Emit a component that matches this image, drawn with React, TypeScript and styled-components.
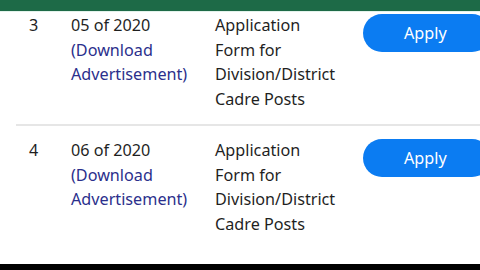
import * as React from 'react';
import styled, { createGlobalStyle } from 'styled-components';

const GREEN = '#1d6a47';
const BLUE = '#0b7cf2';
const NAVY = '#2b2f8c';
const TEXT = '#1f1f1f';
const LINE = '#e6e6e6';

const GlobalStyle = createGlobalStyle`
  html, body {
    margin: 0;
    padding: 0;
    background: #ffffff;
  }
  body {
    width: 480px;
    height: 270px;
    overflow: hidden;
    font-family: "Noto Sans", "Open Sans", sans-serif;
  }
`;

interface Post {
  no: number;
  advt: string;
  title: string[];
}

const posts: Post[] = [
  { no: 3, advt: '05 of 2020', title: ['Application', 'Form for', 'Division/District', 'Cadre Posts'] },
  { no: 4, advt: '06 of 2020', title: ['Application', 'Form for', 'Division/District', 'Cadre Posts'] },
];

function Row({ post, first }: { post: Post; first?: boolean }) {
  return (
    <Row.Wrapper $first={first}>
      <Row.Number>{post.no}</Row.Number>
      <Row.Advt>
        {post.advt}
        <br />
        <Row.Link>(Download</Row.Link>
        <br />
        <Row.Link>Advertisement)</Row.Link>
      </Row.Advt>
      <Row.Title>
        {post.title.map((l, i) => (
          <React.Fragment key={i}>
            {l}
            <br />
          </React.Fragment>
        ))}
      </Row.Title>
      <Row.Action>
        <Row.Button>Apply</Row.Button>
      </Row.Action>
    </Row.Wrapper>
  );
}

Row.Wrapper = styled.div<{ $first?: boolean }>`
  display: grid;
  grid-template-columns: 42px 144px 148px 1fr;
  margin-left: 16px;
  padding: ${(p) => (p.$first ? '1px' : '12px')} 0 12px 13px;
  border-bottom: 2px solid ${(p) => (p.$first ? LINE : 'transparent')};
  font-size: 16.2px;
  line-height: 24.7px;
  color: ${TEXT};
`;

Row.Number = styled.div``;

Row.Advt = styled.div``;

Row.Link = styled.span`
  color: ${NAVY};
`;

Row.Title = styled.div``;

Row.Action = styled.div`
  padding-top: 1px;
`;

Row.Button = styled.button`
  display: block;
  width: 128px;
  height: 38px;
  border: none;
  border-radius: 19px;
  background: ${BLUE};
  color: #ffffff;
  font-family: "Noto Sans", "Open Sans", sans-serif;
  font-size: 16.2px;
  text-align: left;
  padding: 0 0 0 41px;
`;

const Page = styled.div`
  display: flex;
  flex-direction: column;
  width: 480px;
  height: 270px;
  overflow: hidden;
`;

const TopBar = styled.div`
  height: 11px;
  background: ${GREEN};
  border-bottom: 1px solid #e3f3ec;
  flex-shrink: 0;
`;

const List = styled.div`
  flex: 1;
  overflow: hidden;
`;

const BottomBar = styled.div`
  height: 6px;
  background: #000000;
  flex-shrink: 0;
`;

export default function App() {
  return (
    <>
      <GlobalStyle />
      <Page>
        <TopBar />
        <List>
          {posts.map((p, i) => (
            <Row key={p.no} post={p} first={i === 0} />
          ))}
        </List>
        <BottomBar />
      </Page>
    </>
  );
}
